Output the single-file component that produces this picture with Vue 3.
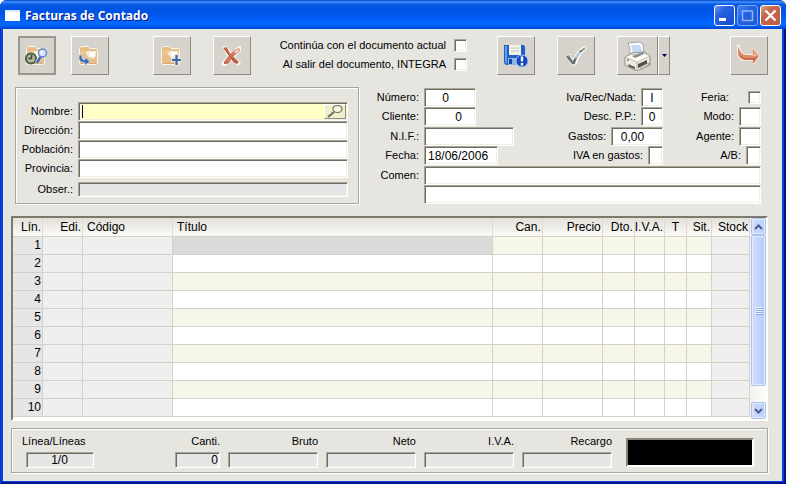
<template>
  <div class="window">
    <header class="titlebar">
      <span class="app-icon"></span>
      <h1>Facturas de Contado</h1>
      <button class="win-btn" aria-label="Minimizar">
        <svg width="21" height="21"><rect x="5" y="13" width="7" height="3" fill="#fff" /></svg>
      </button>
      <button class="win-btn dim" aria-label="Maximizar">
        <svg width="21" height="21"><path d="M5.500 6v9.500h10V6M5 6h11" fill="none" stroke="#8fb4f5" stroke-width="1.500" /></svg>
      </button>
      <button class="win-btn shut" aria-label="Cerrar">
        <svg width="21" height="21"><path d="M5.500 5.500l10 10M15.500 5.500l-10 10" stroke="#fff" stroke-width="2.400" /></svg>
      </button>
    </header>

    <main class="client">
      <svg width="0" height="0" class="defs">
        <symbol id="folder" viewBox="0 0 26 24">
          <path d="M2.500 4.500l2-2h6l2 2h7l1 2v13l-2 1h-15l-1-1z" fill="#e9bd88" stroke="#fbf4e8" />
          <path d="M4 7h14v3H4z" fill="#efc898" />
          <path d="M10 7h9v5l-3 3-5-2-2-3z" fill="#f5ead2" />
          <path d="M12 8h6v4l-3 1-3-2z" fill="#fdfdfb" />
          <path d="M4 19.500h15" stroke="#d9a873" />
        </symbol>
      </svg>

      <div class="toolbar">
        <button class="tool pressed" aria-label="Buscar documento">
          <svg width="26" height="24">
            <use href="#folder" />
            <circle cx="7" cy="14.500" r="5" fill="#b6b797" stroke="#4c5d50" stroke-width="2" />
            <path d="M7.500 11V14.500H4.500" fill="none" stroke="#32463e" stroke-width="1.500" />
            <path d="M17 12l-4 7" stroke="#f4f6fa" stroke-width="4" />
            <path d="M17 12l-4 7" stroke="#3f68ad" stroke-width="2.600" />
            <circle cx="18.500" cy="9" r="4" fill="#d6e5fb" stroke="#5c86c4" stroke-width="1.400" />
            <path d="M16.500 9l2-2" stroke="#fff" stroke-width="1.500" />
          </svg>
        </button>
        <button class="tool recover" aria-label="Recuperar documento">
          <svg width="26" height="24">
            <use href="#folder" />
            <path d="M2 11h3v3q1 2 3 2v-3l5 4.500-5 4V19q-5 0-6-4z" fill="#3d6ab4" stroke="#dfe8f5" stroke-width=".7" />
          </svg>
        </button>
        <button class="tool create" aria-label="Nuevo documento">
          <svg width="26" height="24">
            <use href="#folder" />
            <path d="M17.500 10v12M12 16h11" stroke="#ece8dd" stroke-width="4" />
            <path d="M17.500 11v10M13 16h9" stroke="#3a68b0" stroke-width="2.200" />
          </svg>
        </button>
        <button class="tool remove" aria-label="Borrar documento">
          <svg width="26" height="24">
            <path d="M3 3l5-1 5 7 5-6 4-1v5l-6 5 6 7-3 3-7-5-5 5-5-1 1-3 5-6z" fill="#fbf3ee" />
            <path d="M4 4l4-1q2 6 6 9l6 6-2 2q-4-1-6-5T4 4z" fill="#c66a4e" />
            <path d="M20 4l1 3q-7 4-11 12l-5 1v-2q5-8 11-12z" fill="#cf7a5d" />
            <path d="M19 5l-4 3 1 1 4-2z" fill="#fae3d7" />
            <path d="M6 5q3 6 7 9l5 5M5 19h4" fill="none" stroke="#a94b36" />
          </svg>
        </button>

        <div class="options">
          <label v-for="o in options" :key="o">
            <span>{{ o }}</span>
            <input type="checkbox" class="check">
          </label>
        </div>

        <button class="tool save" aria-label="Guardar">
          <svg width="26" height="24">
            <path d="M1 1h20l1 2v18H3l-2-2z" fill="#1f5fc8" />
            <path d="M2 2h2v17H2z" fill="#6a9be8" />
            <path d="M6 1h12v10H6z" fill="#f4f1e8" />
            <path d="M8 4h8M8 7h8" stroke="#c9c4b8" />
            <path d="M5 14h10v7H5z" fill="#91b4ea" />
            <path d="M6 15h3v5H6z" fill="#1544a5" />
            <circle cx="19" cy="17" r="6" fill="#1747c0" stroke="#a9c5f2" />
            <path d="M19 12.500v5M19 19v2.500" stroke="#fff" stroke-width="2.400" />
          </svg>
        </button>
        <button class="tool accept" aria-label="Aceptar">
          <svg width="26" height="24">
            <path d="M2 12l4-2 4 5q3-8 11-13h2v3q-7 6-9 15l-5 2q-2-6-7-10z" fill="#fbfbf9" />
            <path d="M3 12l3-1 4 6q4-9 12-14v2q-8 6-10 15H9q-2-5-6-8z" fill="#8b9088" />
            <path d="M4 12.500l6 7 4-8 4-5" fill="none" stroke="#5f6861" stroke-width="1.600" />
            <path d="M12 14l5-6" stroke="#b7cfe8" stroke-width="2" />
          </svg>
        </button>
        <button class="tool print" aria-label="Imprimir">
          <svg width="30" height="32">
            <path d="M5 3l11-1 4 2 1 9-12 4-2-5q0-5-2-9z" fill="#fff" stroke="#8c8f94" stroke-width=".8" />
            <path d="M8 5h9l3 8-10 2z" fill="#c3dafa" />
            <path d="M2 17l7-4 12-1 6 4v9l-11 5H12L2 25z" fill="#eeece2" stroke="#8a887e" stroke-width=".9" />
            <path d="M2 17l12 5 13-6-6-3-7 4-5-3z" fill="#fffef8" stroke="#b5b2a6" stroke-width=".8" />
            <path d="M9 16l11-4 1 2-9 4z" fill="#8a8f98" />
            <path d="M14 22v7" stroke="#b7b3a6" />
            <path d="M15 24l9-4v4l-9 4z" fill="#4b504d" />
            <path d="M5 24l7 3v2l-6-2z" fill="#5b5f60" />
            <path d="M17 27l8-4 2 1-8 5z" fill="#ddd9cc" stroke="#706d64" stroke-width=".6" />
            <circle cx="5" cy="20" r="1" fill="#6f7b74" />
          </svg>
        </button>
        <button class="tool more" aria-label="Opciones de impresión">
          <svg width="7" height="4"><path d="M1 0h5L3.500 3z" fill="#000060" /></svg>
        </button>
        <button class="tool leave" aria-label="Salir">
          <svg width="26" height="24">
            <path d="M1 1h3q0 8 6 9h7V4l7 8-7 9v-4H10Q1 17 1 8z" fill="#fbefe6" />
            <path d="M2 2q3 10 10 9h5V5l6 7-6 8v-4h-7q-8-1-8-7z" fill="#dc8c69" />
            <path d="M3 9q3 6 10 5h5l4-2-5 7v-3h-7q-6-1-7-7z" fill="#c9674b" />
            <path d="M13 12h9l-4-4v3z" fill="#f0b98c" />
          </svg>
        </button>
      </div>

      <div class="forms">
        <section class="groove customer">
          <div class="row">
            <label for="nombre">Nombre:</label>
            <div class="field lookup">
              <input id="nombre" type="text">
              <button aria-label="Buscar cliente">
                <svg width="18" height="15">
                  <path d="M8 8l-6 5" stroke="#6c6a5c" stroke-width="2" />
                  <ellipse cx="11.500" cy="5" rx="4.500" ry="3.500" fill="#f7f4da" stroke="#6c6a5c" stroke-width="1.200" />
                </svg>
              </button>
            </div>
          </div>
          <div v-for="f in address" :key="f.id" class="row">
            <label :for="f.id">{{ f.label }}</label>
            <input :id="f.id" class="field" type="text">
          </div>
          <div class="row note">
            <label for="obser">Obser.:</label>
            <input id="obser" class="field readonly" type="text" readonly>
          </div>
        </section>

        <section class="document">
          <div class="columns">
            <div class="col first">
              <div class="row">
                <label for="numero">Número:</label>
                <input id="numero" class="field w52 num-mid" type="text" value="0">
              </div>
              <div class="row">
                <label for="cliente">Cliente:</label>
                <input id="cliente" class="field w52 num" type="text" value="0">
              </div>
              <div class="row">
                <label for="nif">N.I.F.:</label>
                <input id="nif" class="field w90" type="text">
              </div>
              <div class="row">
                <label for="fecha">Fecha:</label>
                <input id="fecha" class="field w74" type="text" value="18/06/2006">
              </div>
            </div>
            <div class="col second">
              <div class="row">
                <label for="iva">Iva/Rec/Nada:</label>
                <input id="iva" class="field w22 center" type="text" value="I">
              </div>
              <div class="row">
                <label for="desc">Desc. P.P.:</label>
                <input id="desc" class="field w22 center" type="text" value="0">
              </div>
              <div class="row">
                <label for="gastos">Gastos:</label>
                <input id="gastos" class="field w52 num-mid" type="text" value="0,00">
              </div>
              <div class="row">
                <label for="ivagastos">IVA en gastos:</label>
                <input id="ivagastos" class="field w15" type="text">
              </div>
            </div>
            <div class="col third">
              <div class="row feria">
                <label for="feria">Feria:</label>
                <input id="feria" type="checkbox" class="check">
              </div>
              <div class="row">
                <label for="modo">Modo:</label>
                <input id="modo" class="field w22" type="text">
              </div>
              <div class="row">
                <label for="agente">Agente:</label>
                <input id="agente" class="field w22" type="text">
              </div>
              <div class="row">
                <label for="ab">A/B:</label>
                <input id="ab" class="field w15" type="text">
              </div>
            </div>
          </div>
          <div class="comments">
            <label for="comen">Comen:</label>
            <div class="lines">
              <input id="comen" class="field" type="text">
              <input class="field" type="text" aria-label="Comentario, segunda línea">
            </div>
          </div>
        </section>
      </div>

      <div class="grid">
        <table>
          <colgroup>
            <col v-for="c in columns" :key="c.name" :class="c.size">
          </colgroup>
          <thead>
            <tr>
              <th v-for="c in columns" :key="c.name" :class="c.align">{{ c.name }}</th>
            </tr>
          </thead>
          <tbody>
            <tr v-for="n in 10" :key="n">
              <td class="line">{{ n }}</td>
              <td class="locked"></td>
              <td class="locked"></td>
              <td :class="{ current: n === 1 }"></td>
              <td v-for="k in 6" :key="k"></td>
              <td class="locked"></td>
            </tr>
          </tbody>
        </table>
        <div class="scrollbar">
          <button aria-label="Subir">
            <svg width="9" height="6"><path d="M1 5l3.500-3.500L8 5" fill="none" stroke="#4d6185" stroke-width="2" /></svg>
          </button>
          <div class="thumb">
            <svg width="8" height="8"><path d="M0 .5h7M0 2.500h7M0 4.500h7M0 6.500h7" stroke="#eef4fe" /><path d="M1 1.500h7M1 3.500h7M1 5.500h7M1 7.500h7" stroke="#8caeec" /></svg>
          </div>
          <button aria-label="Bajar">
            <svg width="9" height="6"><path d="M1 1l3.500 3.500L8 1" fill="none" stroke="#4d6185" stroke-width="2" /></svg>
          </button>
        </div>
      </div>

      <footer class="groove totals">
        <div class="total position">
          <label for="lineas">Línea/Líneas</label>
          <input id="lineas" class="field readonly center" type="text" value="1/0" readonly>
        </div>
        <div v-for="t in totals" :key="t.id" class="total" :class="t.id">
          <label :for="t.id">{{ t.label }}</label>
          <input :id="t.id" class="field readonly" type="text" :value="t.value" readonly>
        </div>
        <output class="amount"></output>
      </footer>
    </main>
  </div>
</template>

<script setup>
const options = ['Continúa con el documento actual', 'Al salir del documento, INTEGRA']

const address = [
  { id: 'direccion', label: 'Dirección:' },
  { id: 'poblacion', label: 'Población:' },
  { id: 'provincia', label: 'Provincia:' },
]

const columns = [
  { name: 'Lín.', size: 'c30', align: 'right' },
  { name: 'Edi.', size: 'c40', align: 'right' },
  { name: 'Código', size: 'c90', align: 'left' },
  { name: 'Título', size: 'wide', align: 'left' },
  { name: 'Can.', size: 'c50', align: 'right' },
  { name: 'Precio', size: 'c60', align: 'right' },
  { name: 'Dto.', size: 'c32', align: 'right' },
  { name: 'I.V.A.', size: 'c30', align: 'right' },
  { name: 'T', size: 'c22', align: 'center' },
  { name: 'Sit.', size: 'c25', align: 'right' },
  { name: 'Stock', size: 'c38', align: 'right' },
]

const totals = [
  { id: 'canti', label: 'Canti.', value: '0' },
  { id: 'bruto', label: 'Bruto', value: '' },
  { id: 'neto', label: 'Neto', value: '' },
  { id: 'ivatotal', label: 'I.V.A.', value: '' },
  { id: 'recargo', label: 'Recargo', value: '' },
]
</script>

<style>
body { background: #fff }
</style>

<style scoped>
* { box-sizing: border-box }
button, input { font: inherit; margin: 0; padding: 0; border-radius: 0; outline: 0 }
.window { background: #0a43d8; border-radius: 7px 7px 0 0; padding: 0 4px 3px 3px; font: 11px/13px "Liberation Sans", Arial, sans-serif; color: #000; overflow: hidden; box-shadow: inset 1px 0 #0831d9, inset -2px -2px #00138c }

.titlebar { height: 29px; margin: 0 -4px 0 -3px; padding: 2px 5px 0; display: flex; align-items: center; gap: 2px; background: linear-gradient(#0842c8 0, #3f94ff 2px, #0a5ce8 4px, #0054e3 9px, #0055e8 14px, #0266ff 22px, #0266ff 25px, #0046cf 29px) }
.app-icon { width: 15px; height: 11px; background: #fff; border-top: 2px solid #dce8fb }
h1 { margin: 0 auto 0 3px; font: bold 12px/18px "Open Sans", "Noto Sans", sans-serif; color: #fff; text-shadow: 1px 1px #0a1883; white-space: nowrap }
.win-btn { width: 21px; height: 21px; border: 1px solid #fff; border-radius: 3px; background: linear-gradient(135deg, #6d9cf6, #2a63e0 30%, #1e55d8 70%, #1747c0); display: flex; align-items: center; justify-content: center }
.win-btn svg { flex: none }
.win-btn.dim { border-color: #7ba6f0; background: linear-gradient(135deg, #4a83f0, #2362e2 40%, #1c56d6) }
.win-btn.shut { background: linear-gradient(135deg, #e5a384, #c4664a 35%, #bd5d41) }

.client { background: #e6e5e0; padding: 7px 14px 8px 8px }
.defs { position: absolute }

.toolbar { display: flex; padding-left: 7px }
.tool { width: 38px; height: 39px; flex: none; background: #d6d3cc; border: 1px solid; border-color: #fff #8e8b82 #8e8b82 #fff; display: flex; align-items: center; justify-content: center }
.pressed { border: 2px solid #9a978f }
.recover { margin-left: 15px }
.create { margin-left: 44px }
.remove { margin-left: 22px }
.options { flex: 1; margin-right: 30px; padding-top: 3px; display: flex; flex-direction: column; align-items: flex-end; gap: 6px }
.options label { display: flex; align-items: center; gap: 8px; white-space: nowrap }
.accept { margin-left: 22px }
.print { margin-left: 22px; width: 41px }
.more { width: 12px }
.leave { margin-left: 60px }

.field, .check { appearance: none; background: #fff; border: 1px solid; border-color: #a7a698 #fff #fff #a7a698; box-shadow: inset 1px 1px #6f6b5e, inset -1px -1px #f1efe2 }
.check { width: 13px; height: 13px; flex: none }
.field { font-size: 12px; height: 19px; min-width: 0; padding: 1px 3px 0 }
.readonly { background: #e6e6e6 }
.center { text-align: center }

.forms { display: flex; margin-top: 12px; gap: 16px; padding-left: 4px }
.groove { border: 1px solid #a7a698; box-shadow: 1px 1px #fff, inset 1px 1px #fff }
.customer { flex: 1 1 344px; min-width: 0; height: 117px; padding: 14px 10px 0 8px }
.row { display: flex; align-items: center; justify-content: flex-end; gap: 5px; height: 19px }
.row label { white-space: nowrap }
.customer .row .field { flex: none; width: calc(100% - 54px) }
.note { margin-top: 4px; height: 15px }
.note .field { height: 15px }
.lookup { display: flex; background: #ffffc6; position: relative; padding: 1px }
.lookup::before { content: ""; position: absolute; left: 3px; top: 2px; width: 1px; height: 13px; background: #00006c }
.lookup input { flex: 1; min-width: 0; border: 0; background: none; padding: 0 4px }
.lookup button { width: 22px; border: 1px solid; border-color: #fff #8e8b82 #8e8b82 #fff; background: #f1eecb; display: flex; align-items: center; justify-content: center }

.document { flex: 1 1 393px; min-width: 0; padding: 1px 7px 0 0 }
.columns { display: flex }
.col .row:nth-child(3) { margin-top: 1px }
.first .row { justify-content: flex-start }
.first label, .comments label { width: 44px; text-align: right }
.second { margin-left: auto }
.third { width: 98px }
.feria { gap: 19px }
.w15 { width: 15px }
.w22 { width: 22px }
.w52 { width: 52px }
.w74 { width: 74px }
.w90 { width: 90px }
.num { text-align: right; padding-right: 13px }
.num-mid { text-align: center; padding-right: 12px }
.comments { display: flex; gap: 5px; margin-top: 1px }
.comments label { padding-top: 3px }
.lines { flex: 1; display: flex; flex-direction: column }

.grid { display: flex; margin-top: 12px; background: #fff; border: 2px solid; border-color: #7d796c #fff #fff #7d796c; height: 205px }
table { flex: 1; table-layout: fixed; border-collapse: separate; border-spacing: 0; height: 199px; font-size: 12px; line-height: 17px }
th, td { height: 18px; padding: 0 2px 0 4px; border-right: 1px solid #d4d1c8; border-bottom: 1px solid #d4d1c8; font-weight: normal; white-space: nowrap }
th { height: 19px; background: linear-gradient(#e2e0d9, #f9f8f3 90%); border-right-color: #dedbd2; padding: 0 1px 0 4px }
tbody tr:nth-child(odd) td { background: #f6f6e9 }
tbody td.line, tbody tr:nth-child(odd) td.line { background: #e6e6e6; text-align: right; padding: 0 1px 0 0 }
tbody td.locked, tbody tr:nth-child(odd) td.locked { background: #efefef }
tbody tr:nth-child(odd) td.current { background: #dadada }
.left { text-align: left }
.right { text-align: right; padding-left: 0 }
th.center { padding: 0 }
.c22 { width: 22px }
.c25 { width: 25px }
.c30 { width: 30px }
.c32 { width: 32px }
.c38 { width: 38px }
.c40 { width: 40px }
.c50 { width: 50px }
.c60 { width: 60px }
.c90 { width: 90px }

.scrollbar { width: 16px; flex: none; background: linear-gradient(90deg, #f3f1ec, #fefefb); display: flex; flex-direction: column; padding: 0 0 0 1px }
.scrollbar button, .thumb { border: 1px solid #a9c3f5; border-radius: 2px; background: linear-gradient(90deg, #cfddfd, #b9cdf9); box-shadow: inset 0 0 0 1px #e2ebfe; display: flex; align-items: center; justify-content: center; flex: none }
.scrollbar button { height: 17px }
.scrollbar .thumb { height: 151px; margin-bottom: auto }

.totals { display: flex; height: 45px; margin-top: 7px; padding: 6px 13px 0 10px; gap: 8px }
.total { display: flex; flex-direction: column; width: 90px; gap: 4px; text-align: right }
.total .field { height: 16px; width: 100%; padding: 0 1px 0 0; text-align: inherit }
.total .position, .position { width: 72px; text-align: left; margin-right: auto }
.position .field { width: 68px; margin-left: 4px; text-align: center }
.canti { width: 45px }
.amount { width: 128px; height: 29px; margin: 3px 0 0 6px; background: #000; border: 2px solid; border-color: #87847a #fff #fff #87847a }
</style>
